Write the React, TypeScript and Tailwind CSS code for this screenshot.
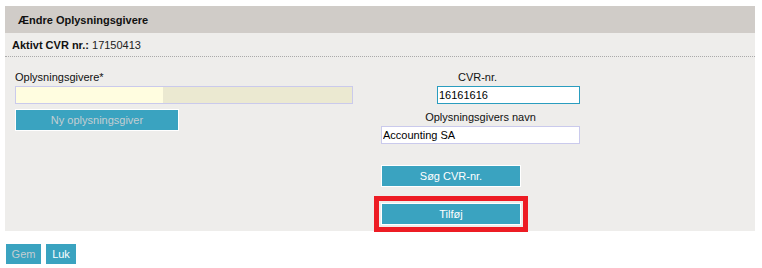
const font = { fontFamily: '"Liberation Sans", Arial, sans-serif' }

function TealButton({
  label,
  disabled,
  className = '',
}: {
  label: string
  disabled?: boolean
  className?: string
}) {
  return (
    <button
      className={`flex items-center justify-center border border-white bg-[#3aa3c0] text-[11px] ${
        disabled ? 'text-[#c4ced2]' : 'text-white'
      } ${className}`}
    >
      {label}
    </button>
  )
}

export default function App() {
  return (
    <div className="min-h-[268px] w-[762px] bg-white text-[11px] leading-[14px] text-[#111]" style={font}>
      <div className="pt-[6px] pl-[5px]">
        <section className="w-[750px] bg-[#eeedeb]">
          <header className="flex h-[27px] items-center bg-[#d0ccc8] pl-[13px] font-bold">
            Ændre Oplysningsgivere
          </header>
          <div className="flex h-[24px] items-center border-b border-dotted border-[#aaa] pl-[7px]">
            <span className="font-bold">Aktivt CVR nr.:</span>
            <span className="ml-[3px] text-[#222]">17150413</span>
          </div>

          <div className="flex gap-[28px] pt-[13px] pb-[6px] pl-[10px]">
            <div className="flex w-[338px] flex-col">
              <label className="h-[14px]">Oplysningsgivere*</label>
              <div className="mt-[2px] flex h-[18px] border border-[#cacaec] bg-[#ebe9d1]">
                <div className="w-[147px] bg-[#fffde0]" />
              </div>
              <TealButton label="Ny oplysningsgiver" disabled className="mt-[5px] h-[22px] w-[164px]" />
            </div>

            <div className="flex w-[199px] flex-col">
              <label className="h-[14px] pr-[6px] text-center">CVR-nr.</label>
              <input
                readOnly
                value="16161616"
                className="mt-[2px] ml-[56px] h-[18px] w-[143px] border border-[#2a9dbf] bg-white px-[1px] text-[11px] text-black outline-none"
                style={font}
              />
              <label className="mt-[6px] h-[14px] text-center">Oplysningsgivers navn</label>
              <input
                readOnly
                value="Accounting SA"
                className="mt-[2px] h-[18px] w-[199px] border border-[#cacaec] bg-white px-[1px] text-[11px] text-black outline-none"
                style={font}
              />
              <TealButton label="Søg CVR-nr." className="mt-[21px] h-[22px] w-[140px]" />
              <TealButton
                label="Tilføj"
                className="mt-[16px] h-[22px] w-[140px] outline-[5px] outline-offset-[2px] outline-[#ed1c24] outline-solid"
              />
            </div>
          </div>
        </section>
      </div>

      <div className="flex gap-[5px] pt-[13px] pl-[6px]">
        <button className="h-[20px] w-[35px] bg-[#3aa3c0] text-[11px] text-[#c4ced2]">Gem</button>
        <button className="h-[20px] w-[30px] bg-[#3aa3c0] text-[11px] text-white">Luk</button>
      </div>
    </div>
  )
}
